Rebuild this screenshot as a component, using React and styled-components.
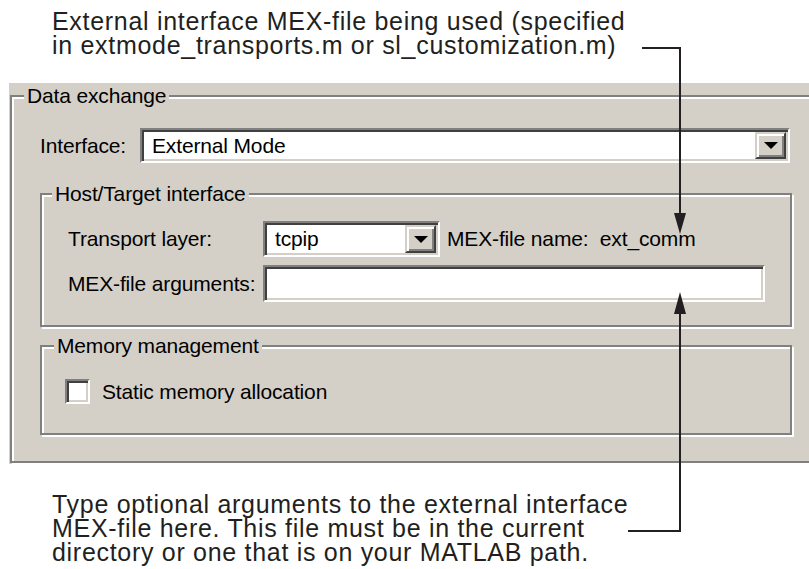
import React from 'react'
import styled, { createGlobalStyle } from 'styled-components'

const GlobalStyle = createGlobalStyle`
  html, body {
    margin: 0;
    padding: 0;
    background: #ffffff;
    overflow: hidden;
  }
`;

const PageStyle = styled.div`
  position: relative;
  width: 809px;
  height: 569px;
  overflow: hidden;
  background: #ffffff;
  font-family: "Liberation Sans", Arial, sans-serif;
`;

const CaptionStyle = styled.div`
  margin-left: 52px;
  padding-top: ${props => props.$top}px;
  font-size: 25px;
  line-height: 24px;
  letter-spacing: 0.7px;
  color: #231f20;
  white-space: pre-line;
`;

const PanelStyle = styled.div`
  margin-top: ${props => props.$top}px;
  margin-left: 9px;
  width: 830px;
  height: 381px;
  padding: 12px 0 0 1px;
  box-sizing: border-box;
  background: #d4d0c8;
  color: #000;
  font-size: 21px;
  line-height: 24px;
  letter-spacing: -0.15px;
`;

const GroupStyle = styled.div`
  width: ${props => props.$width}px;
  height: ${props => props.$height}px;
  margin-top: ${props => props.$top || 0}px;
  box-sizing: border-box;
  border: 2px solid #808080;
  box-shadow: inset 2px 2px 0 #ffffff, 2px 2px 0 #ffffff;
  padding: 0 0 0 ${props => props.$padLeft}px;
`;

const LegendStyle = styled.div`
  width: fit-content;
  margin: -13px 0 0 ${props => props.$shift}px;
  padding: 0 3px;
  background: #d4d0c8;
  white-space: nowrap;
`;

const RowStyle = styled.div`
  display: flex;
  align-items: center;
  margin-top: ${props => props.$top}px;
`;

const LabelStyle = styled.div`
  width: ${props => props.$width}px;
  flex: none;
  white-space: nowrap;
`;

const SunkenStyle = styled.div`
  display: flex;
  align-items: center;
  justify-content: space-between;
  width: ${props => props.$width}px;
  height: ${props => props.$height}px;
  flex: none;
  box-sizing: border-box;
  border: 2px solid;
  border-color: #808080 #ffffff #ffffff #808080;
  box-shadow: inset 2px 2px 0 #404040, inset -2px -2px 0 #d4d0c8;
  background: #ffffff;
  padding: 2px 2px 2px 10px;
`;

const ValueStyle = styled.span`
  white-space: nowrap;
`;

const DropButtonStyle = styled.div`
  display: flex;
  align-items: center;
  justify-content: center;
  width: 31px;
  height: 100%;
  box-sizing: border-box;
  background: #d4d0c8;
  border: 2px solid;
  border-color: #d4d0c8 #404040 #404040 #d4d0c8;
  box-shadow: inset 2px 2px 0 #ffffff, inset -2px -2px 0 #808080;
`;

const ArrowStyle = styled.div`
  width: 0;
  height: 0;
  border-left: 7px solid transparent;
  border-right: 7px solid transparent;
  border-top: 7px solid #000;
`;

const NameInfoStyle = styled.div`
  margin-left: 7px;
  white-space: pre;
`;

const CheckRowStyle = styled.div`
  display: flex;
  align-items: center;
  gap: 12px;
  margin-top: 21px;
`;

const CheckBoxStyle = styled.div`
  width: 25px;
  height: 25px;
  box-sizing: border-box;
  border: 2px solid;
  border-color: #808080 #ffffff #ffffff #808080;
  box-shadow: inset 2px 2px 0 #404040, inset -2px -2px 0 #d4d0c8;
  background: #ffffff;
`;

const LeadersStyle = styled.svg`
  position: absolute;
  left: 0;
  top: 0;
  pointer-events: none;
`;

function ComboBox({ width, height, value }) {
  return (
    <SunkenStyle $width={width} $height={height}>
      <ValueStyle>{value}</ValueStyle>
      <DropButtonStyle>
        <ArrowStyle />
      </DropButtonStyle>
    </SunkenStyle>
  )
}

function Leaders() {
  return (
    <LeadersStyle width="809" height="569" viewBox="0 0 809 569">
      <g stroke="#231f20" strokeWidth="2" fill="none">
        <polyline points="642,48 680,48 680,215" />
        <polyline points="680,312 680,531 628,531" />
      </g>
      <g fill="#231f20">
        <polygon points="674,213 686,213 680,234" />
        <polygon points="680,292 674,314 686,314" />
      </g>
    </LeadersStyle>
  )
}

export default function App() {
  return (
    <PageStyle>
      <GlobalStyle />

      <CaptionStyle $top={9}>
        {'External interface MEX-file being used (specified\nin extmode_transports.m or sl_customization.m)'}
      </CaptionStyle>

      <PanelStyle $top={26}>
        <GroupStyle $width={840} $height={368} $padLeft={28}>
          <LegendStyle $shift={-16}>Data exchange</LegendStyle>

          <RowStyle $top={20}>
            <LabelStyle $width={100}>Interface:</LabelStyle>
            <ComboBox width={650} height={35} value="External Mode" />
          </RowStyle>

          <GroupStyle $width={752} $height={134} $top={30} $padLeft={26}>
            <LegendStyle $shift={-16}>Host/Target interface</LegendStyle>

            <RowStyle $top={15}>
              <LabelStyle $width={195}>Transport layer:</LabelStyle>
              <ComboBox width={177} height={36} value="tcpip" />
              <NameInfoStyle>{'MEX-file name:  ext_comm'}</NameInfoStyle>
            </RowStyle>

            <RowStyle $top={8}>
              <LabelStyle $width={195}>MEX-file arguments:</LabelStyle>
              <SunkenStyle $width={502} $height={37} />
            </RowStyle>
          </GroupStyle>

          <GroupStyle $width={752} $height={90} $top={18} $padLeft={23}>
            <LegendStyle $shift={-11}>Memory management</LegendStyle>
            <CheckRowStyle>
              <CheckBoxStyle />
              <span>Static memory allocation</span>
            </CheckRowStyle>
          </GroupStyle>
        </GroupStyle>
      </PanelStyle>

      <CaptionStyle $top={28}>
        {'Type optional arguments to the external interface\nMEX-file here. This file must be in the current\ndirectory or one that is on your MATLAB path.'}
      </CaptionStyle>

      <Leaders />
    </PageStyle>
  )
}
